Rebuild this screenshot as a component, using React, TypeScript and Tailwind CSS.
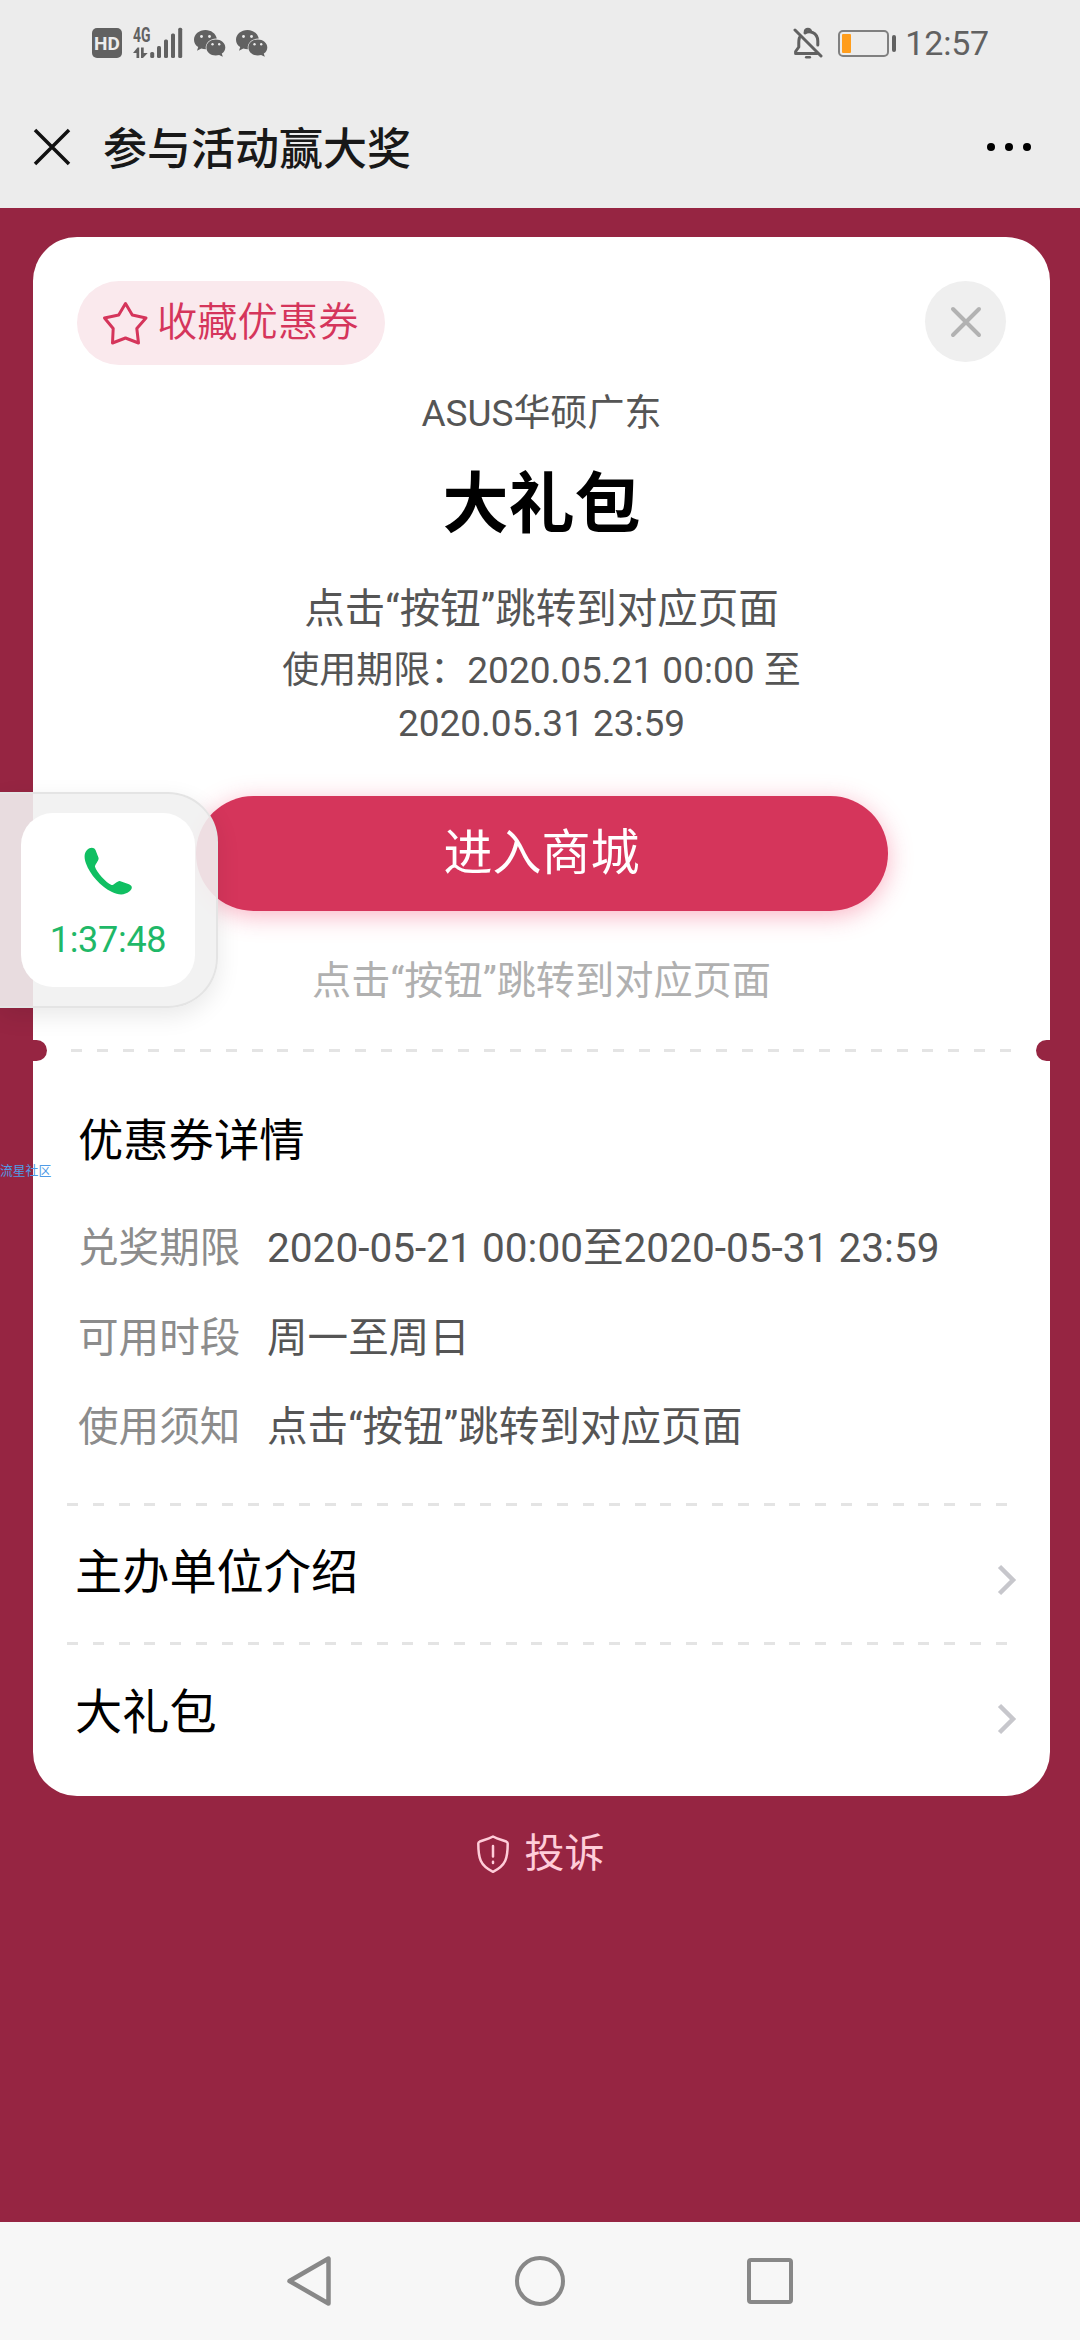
import React from "react";

const details = [
  { label: "兑奖期限", value: "2020-05-21 00:00至2020-05-31 23:59" },
  { label: "可用时段", value: "周一至周日" },
  { label: "使用须知", value: "点击“按钮”跳转到对应页面" },
];

const links = ["主办单位介绍", "大礼包"];

const WechatIcon = () => (
  <svg className="h-[27px] w-[32px]" viewBox="0 0 32 27" fill="#616161">
    <path d="M11.5 0C5.100 0 0 4.300 0 9.700c0 3 1.600 5.600 4.200 7.400L3 20.800l4.300-2.200c1.500.5 2.900.7 4.600.7-1.200-5.700 3.700-11 10.900-10.800C21.700 3.500 17 0 11.500 0Z" />
    <path d="M31.300 17.400c0-4.500-4.300-8-9.500-8-5.300 0-9.400 3.500-9.400 8s4.100 8 9.400 8c1.200 0 2.300-.2 3.300-.5l3.700 1.900-1-3.200c2.200-1.500 3.500-3.700 3.500-6.200Z" />
    <g fill="#ececec">
      <circle cx="7.500" cy="6.500" r="1.400" />
      <circle cx="15.500" cy="6.500" r="1.400" />
      <circle cx="18.500" cy="14.300" r="1.200" />
      <circle cx="25.200" cy="14.300" r="1.200" />
    </g>
  </svg>
);

const SignalIcon = () => (
  <svg className="h-[48px] w-[50px]" viewBox="0 -8 50 48" fill="#616161">
    <text x="0" y="14.500" fontFamily="Roboto, sans-serif" fontSize="19.500" fontWeight="700" textLength="17.500" lengthAdjust="spacingAndGlyphs">
      4G
    </text>
    <path d="M0 26l4.500-5.500h1.700V31H3.500v-5ZM8 20.500h2.700V26h4L10 31H8Z" />
    <rect x="17.200" y="25" width="4" height="6" rx="1.500" />
    <rect x="24" y="19" width="4" height="12" rx="1.500" />
    <rect x="31" y="12.500" width="4" height="18.500" rx="1.500" />
    <rect x="38" y="6.500" width="4" height="24.500" rx="1.500" />
    <rect x="45.200" y="0.800" width="4" height="30.200" rx="1.500" />
  </svg>
);

const StatusBar = () => (
  <div className="flex h-[86px] items-center justify-between pl-[92px] pr-[91px]">
    <div className="flex items-center">
      <span className="flex h-[30px] w-[30px] items-center justify-center rounded-[5px] bg-[#616161] text-[19px] font-bold leading-none text-[#ececec]">
        HD
      </span>
      <div className="ml-[11px] flex">
        <SignalIcon />
      </div>
      <div className="ml-[11px] flex gap-[10px]">
        <WechatIcon />
        <WechatIcon />
      </div>
    </div>
    <div className="flex items-center">
      <svg className="h-[32px] w-[30px]" viewBox="0 0 30 32" fill="none" stroke="#616161" strokeWidth="3" strokeLinecap="round">
        <path d="M2 3l26 26" />
        <path d="M6.500 10.500C5.500 13 5.800 16 5.800 20L2.600 24.500v2H24" strokeLinejoin="round" />
        <path d="M12 6c4-2.600 12.500-1 12.800 8v4" />
        <path d="M12.200 4.500c.4-3 5-3 5.400 0" />
        <path d="M13.200 30.300h3.600" strokeWidth="2.500" />
      </svg>
      <div className="ml-[15px] h-[27px] w-[51px] rounded-[5px] border-2 border-[#808080] p-[2px]">
        <div className="h-full w-[9px] rounded-[1px] bg-[#ff9d1c]" />
      </div>
      <div className="ml-[3px] h-[17px] w-[4px] rounded-[2px] bg-[#616161]" />
      <span className="ml-[9px] text-[34px] leading-none tracking-[-0.2px] text-[#616161]">12:57</span>
    </div>
  </div>
);

const TitleBar = () => (
  <div className="flex h-[122px] items-center pl-[33px] pr-[49px]">
    <svg className="h-[38px] w-[38px]" viewBox="0 0 38 38" stroke="#111" strokeWidth="3.500">
      <path d="M2 2l34 34M36 2L2 36" />
    </svg>
    <h1 className="ml-[32px] pt-[5px] text-[44px] font-medium leading-[60px] text-[#181818]">参与活动赢大奖</h1>
    <div className="ml-auto flex gap-[10px]">
      <i className="h-2 w-2 rounded-full bg-black" />
      <i className="h-2 w-2 rounded-full bg-black" />
      <i className="h-2 w-2 rounded-full bg-black" />
    </div>
  </div>
);

const Dashes = () => (
  <div className="h-[3px] w-[941px] bg-[repeating-linear-gradient(90deg,#e4e4e4_0px,#e4e4e4_11px,transparent_11px,transparent_25.800px)]" />
);

const CallBubble = () => (
  <div className="absolute left-0 top-[792px] flex h-[216px] w-[218px] items-center rounded-r-[50px] border-2 border-l-0 border-[#e4e4e4] bg-[#f1f1f1]/90 pl-[21px] shadow-[0_8px_24px_rgba(0,0,0,0.09)]">
    <div className="flex h-[174px] w-[174px] flex-col items-center rounded-[32px] bg-white pt-[34px] text-[#10bf62]">
      <svg className="h-[49px] w-[49px]" viewBox="0 0 49 49" fill="currentColor">
        <path d="M3 3C6-.1 10-.1 11.500 3l3 7.800c.8 2.600-3.800 6.700-3.500 9C12.500 25 22 35.800 27.500 38c2 .6 5.800-4.200 8.200-4l9.300 3.200c3.800 1.500 3.600 4.700.3 7.400-4.600 3.800-11 3.500-17.300.5C16.500 39.600 6 27.500 2 16.500.2 11.500-.3 6.500 3 3Z" />
      </svg>
      <span className="mt-[21px] text-[36px] leading-[46px] tracking-[-0.3px] text-[#1fb868]">1:37:48</span>
    </div>
  </div>
);

const NavBar = () => (
  <div className="flex h-[118px] items-center justify-between bg-[#f7f7f7] pl-[285px] pr-[287px]">
    <svg className="h-[54px] w-[48px]" viewBox="0 0 48 54" fill="none" stroke="#888" strokeWidth="4.500" strokeLinejoin="round">
      <path d="M43.500 4.500v45L4.500 27Z" />
    </svg>
    <div className="h-[50px] w-[50px] rounded-full border-4 border-[#888]" />
    <div className="h-[46px] w-[46px] rounded-[4px] border-4 border-[#888]" />
  </div>
);

export default function App() {
  return (
    <div className="relative flex h-[2340px] w-[1080px] flex-col overflow-hidden bg-[#962542] font-[Roboto,'Noto_Sans_CJK_SC',sans-serif]">
      <header className="bg-[#ececec]">
        <StatusBar />
        <TitleBar />
      </header>

      <main className="flex-1 px-[33px] pt-[29px]">
        <section className="flex h-[1559px] w-[1017px] flex-col overflow-hidden rounded-[44px] bg-white pt-[44px]">
          <div className="flex items-start justify-between px-[44px]">
            <button className="flex h-[84px] w-[308px] items-center rounded-full bg-[#fae9ed] pl-[25px] text-[40.300px] font-[350] leading-none text-[#d5355b]">
              <svg className="mr-[9px] h-[46px] w-[46px]" viewBox="0 0 46 46" fill="none" stroke="currentColor" strokeWidth="3" strokeLinejoin="round">
                <path d="M23.500 3.500l6.800 11.500 13.700 3-9.200 10.500 1.700 14.500-13-5-13 5 .7-14.500L2.500 18l14.200-3Z" />
              </svg>
              收藏优惠券
            </button>
            <button className="flex h-[81px] w-[81px] items-center justify-center rounded-full bg-[#efefef]">
              <svg className="h-[34px] w-[34px]" viewBox="0 0 34 34" stroke="#b2b2b2" strokeWidth="4" strokeLinecap="round">
                <path d="M4 4l26 26M30 4L4 30" />
              </svg>
            </button>
          </div>

          <div className="flex flex-col items-center text-[#555]">
            <p className="mt-[22px] h-[54px] text-[37px] leading-[54px]">ASUS华硕广东</p>
            <h2 className="mt-[19px] h-[90px] text-[66px] font-bold leading-[90px] text-black">大礼包</h2>
            <p className="mt-[31px] h-[56px] text-[40.500px] leading-[56px]">点击“按钮”跳转到对应页面</p>
            <p className="mt-[7px] h-[53px] text-[37px] leading-[54px]">使用期限：2020.05.21 00:00 至</p>
            <p className="h-[54px] text-[37px] leading-[54px]">2020.05.31 23:59</p>
            <button className="mt-[45px] h-[115px] w-[692px] rounded-full bg-[#d5355b] text-[49px] text-white shadow-[0_5px_24px_rgba(240,50,95,0.36)]">
              进入商城
            </button>
            <p className="mt-[43px] h-[54px] text-[39.200px] leading-[54px] text-[#b0b0b0]">点击“按钮”跳转到对应页面</p>
          </div>

          {/* ticket tear line */}
          <div className="mt-[32px] flex h-[21px] items-center justify-between">
            <i className="h-[21px] w-[14px] rounded-r-full bg-[#962542]" />
            <Dashes />
            <i className="h-[21px] w-[14px] rounded-l-full bg-[#962542]" />
          </div>

          <div className="px-[45px] pt-[51px]">
            <h3 className="h-[60px] text-[45.300px] leading-[60px] text-black">优惠券详情</h3>
            <div className="mt-[32px]">
              {details.map((row) => (
                <div key={row.label} className="flex h-[89.500px] items-center text-[40.600px] leading-none">
                  <span className="w-[189px] text-[#8c8c8c]">{row.label}</span>
                  <span className="whitespace-nowrap text-[#555]">{row.value}</span>
                </div>
              ))}
            </div>
          </div>

          <div className="mt-[30px] pl-[34px]">
            {links.map((name) => (
              <div key={name} className="h-[139.500px]">
                <Dashes />
                <div className="flex h-[137px] items-center justify-between pl-[8px] pr-[33px]">
                  <span className="text-[47.200px] leading-none text-black">{name}</span>
                  <svg className="mt-[11px] h-[32px] w-[20px]" viewBox="0 0 20 32" fill="none" stroke="#c7c7cc" strokeWidth="4.500">
                    <path d="M2.500 2.500L16 16 2.500 29.500" />
                  </svg>
                </div>
              </div>
            ))}
          </div>
        </section>

        <div className="mt-[28px] flex h-[60px] items-center justify-center text-[40px] leading-none text-[#ffcdd9]">
          <svg className="mr-[15px] h-[40px] w-[34px]" viewBox="0 0 34 40" fill="none" stroke="currentColor" strokeWidth="2.500" strokeLinecap="round" strokeLinejoin="round">
            <path d="M17 2.500C12.500 5 8 6 3.800 7.500c-1 .5-1.500 1-1.500 2C2.300 24 4 31.500 17 37.800 30 31.500 31.700 24 31.700 9.500c0-1-.5-1.500-1.500-2C26 6 21.500 5 17 2.500Z" />
            <path d="M17 12v10.500M17 27.800v1.200" />
          </svg>
          投诉
        </div>
      </main>

      <NavBar />
      <CallBubble />
      <span className="absolute left-0 top-[1162px] text-[12.800px] leading-[18px] text-[#4f9be6]">流星社区</span>
    </div>
  );
}
